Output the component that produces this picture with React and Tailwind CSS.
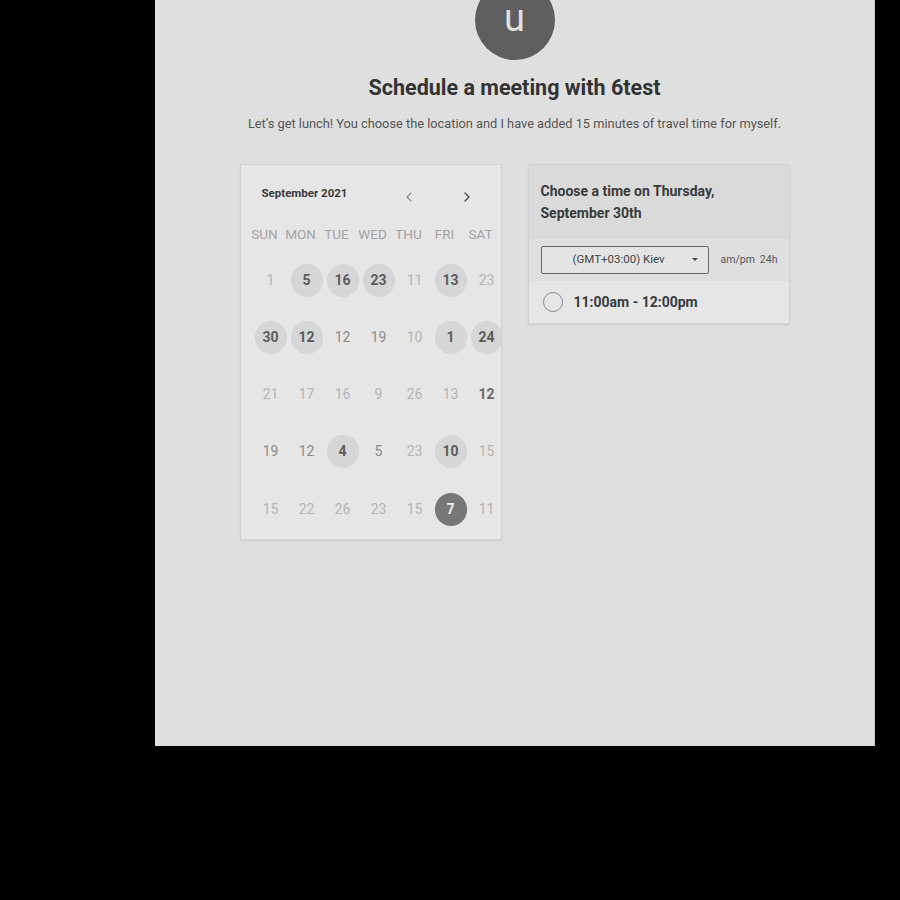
import { ChevronLeft, ChevronRight } from 'lucide-react'

const DAYS = ['SUN', 'MON', 'TUE', 'WED', 'THU', 'FRI', 'SAT']

// v: value, s: style  (l = light, m = medium, b = bold plain, c = circled, x = selected)
const WEEKS = [
  [['1', 'l'], ['5', 'c'], ['16', 'c'], ['23', 'c'], ['11', 'l'], ['13', 'c'], ['23', 'l']],
  [['30', 'c'], ['12', 'c'], ['12', 'm'], ['19', 'm'], ['10', 'l'], ['1', 'c'], ['24', 'c']],
  [['21', 'l'], ['17', 'l'], ['16', 'l'], ['9', 'l'], ['26', 'l'], ['13', 'l'], ['12', 'b']],
  [['19', 'm'], ['12', 'm'], ['4', 'c'], ['5', 'm'], ['23', 'l'], ['10', 'c'], ['15', 'l']],
  [['15', 'l'], ['22', 'l'], ['26', 'l'], ['23', 'l'], ['15', 'l'], ['7', 'x'], ['11', 'l']],
]

const dayStyle = {
  l: 'text-[#b4b4b4]',
  m: 'text-[#8a8a8a]',
  b: 'text-[#6a6a6a] font-bold',
  c: 'bg-[#d6d6d6] text-[#5c5c5c] font-bold',
  x: 'bg-[#777777] text-[#eeeeee] font-bold',
}

export default function App() {
  return (
    <div className="w-[900px] h-[900px] bg-black overflow-hidden" style={{ fontFamily: 'Roboto, "Liberation Sans", sans-serif' }}>
      <div className="ml-[155px] w-[720px] h-[746px] bg-[#dfdfdf] border-r border-[#c8c8c8] flex flex-col items-center">
        <div className="-mt-5 w-20 h-20 rounded-full bg-[#5e5e5e] flex items-center justify-center">
          <span className="text-[38px] leading-none text-[#e0e0e0] mt-[-5px]">u</span>
        </div>

        <h1 className="mt-[12px] text-[21.5px] font-bold text-[#333]">Schedule a meeting with 6test</h1>
        <p className="mt-[10px] text-[12.8px] text-[#555]">
          Let’s get lunch! You choose the location and I have added 15 minutes of travel time for myself.
        </p>

        <div className="mt-[31px] flex gap-[26px] items-start">
          <Calendar />
          <TimePanel />
        </div>
      </div>
    </div>
  )
}

function Calendar() {
  return (
    <div className="w-[262px] h-[376px] bg-[#e6e6e6] border border-[#d2d2d2] rounded-[2px] shadow-[0_1px_2px_rgba(0,0,0,0.08)] overflow-hidden">
      <div className="flex items-center h-[57px] pl-[21px] pr-[26px]">
        <span className="text-[11.5px] font-bold text-[#3a3a3a]">September 2021</span>
        <ChevronLeft className="ml-auto mt-[6px] w-4 h-4 text-[#8a8a8a]" strokeWidth={1.6} />
        <ChevronRight className="ml-[42px] mt-[6px] w-4 h-4 text-[#444]" strokeWidth={1.8} />
      </div>
      <div className="grid grid-cols-[repeat(7,36px)] ml-[6px] h-[24px] items-center">
        {DAYS.map(d => (
          <div key={d} className="text-center text-[13.5px] text-[#a3a3a3]">{d}</div>
        ))}
      </div>
      <div className="ml-[12px] mt-[5px]">
        {WEEKS.map((week, i) => (
          <div key={i} className="grid grid-cols-[repeat(7,36px)] h-[57.3px] items-center">
            {week.map(([v, s], j) => (
              <div key={j} className="flex justify-center">
                <div className={`w-8 h-[33px] rounded-full flex items-center justify-center text-[14px] ${dayStyle[s]}`}>
                  {v}
                </div>
              </div>
            ))}
          </div>
        ))}
      </div>
    </div>
  )
}

function TimePanel() {
  return (
    <div className="w-[262px] bg-[#e6e6e6] border border-[#d2d2d2] rounded-[2px] shadow-[0_1px_2px_rgba(0,0,0,0.1)]">
      <div className="h-[72px] bg-[#dadada] px-[12px] pt-[15px]">
        <div className="text-[14px] font-bold text-[#3a3a3a] leading-[22px]">
          Choose a time on Thursday,<br />September 30th
        </div>
      </div>
      <div className="h-[44px] bg-[#dedede] flex items-center px-[12px] border-t border-[#d4d4d4]">
        <div className="shrink-0 w-[168px] h-[28px] border border-[#6a6a6a] rounded-[2px] bg-[#e4e4e4] flex items-center pl-[31px] pr-[10px]">
          <span className="text-[11.5px] text-[#444]">(GMT+03:00) Kiev</span>
          <span className="ml-auto w-0 h-0 border-l-[3px] border-r-[3px] border-t-[3px] border-l-transparent border-r-transparent border-t-[#444]" />
        </div>
        <span className="ml-[12px] text-[10.5px] text-[#555]">am/pm</span>
        <span className="ml-[5px] text-[10.5px] text-[#555]">24h</span>
      </div>
      <div className="h-[42px] flex items-center px-[14px]">
        <div className="w-5 h-5 rounded-full border-[1.5px] border-[#8a8a8a]" />
        <span className="ml-[11px] text-[14px] font-bold text-[#3a3a3a]">11:00am - 12:00pm</span>
      </div>
    </div>
  )
}
